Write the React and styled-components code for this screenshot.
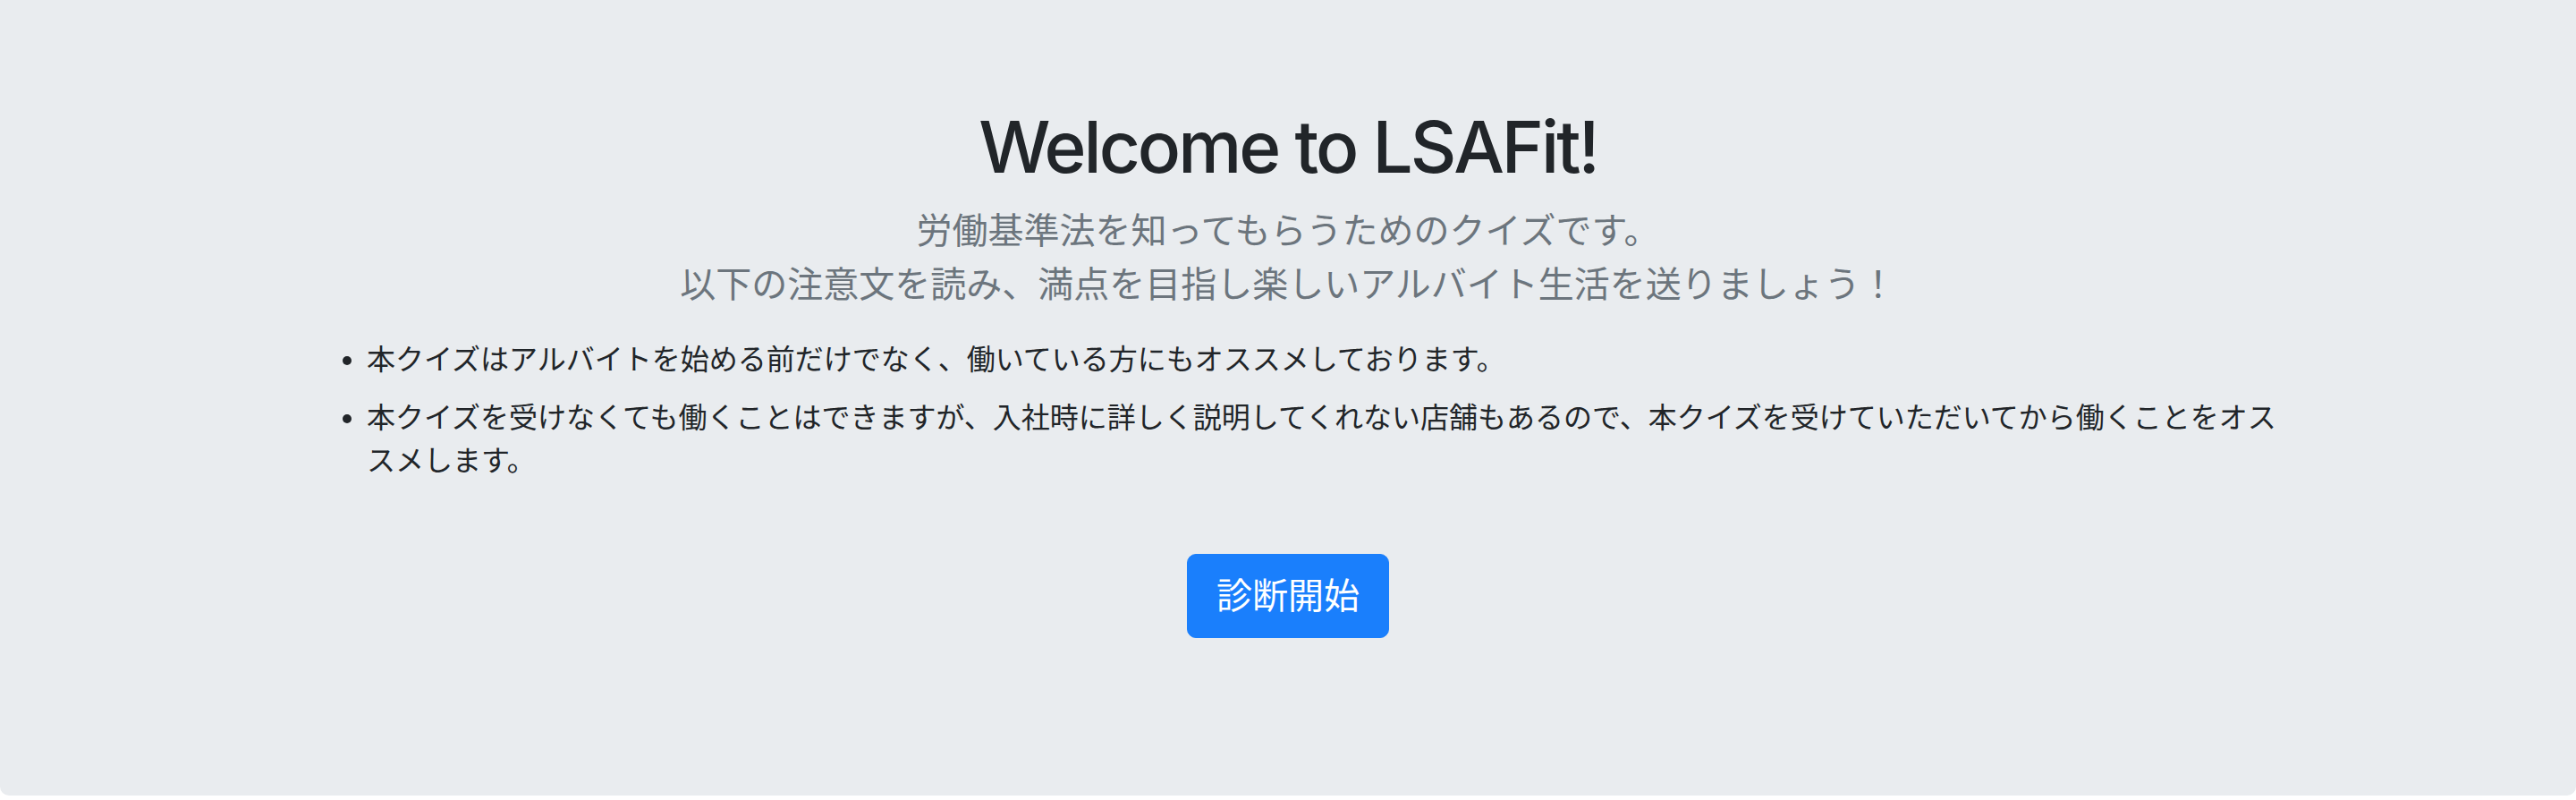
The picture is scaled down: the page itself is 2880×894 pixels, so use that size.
import React from 'react';
import styled, { createGlobalStyle } from 'styled-components';

var GlobalStyle = createGlobalStyle`
  *, *::before, *::after {
    box-sizing: border-box;
  }
  body {
    margin: 0;
    background: #fff;
    font-family: "Inter", "Noto Sans CJK JP", sans-serif;
    color: #212529;
  }
`

var Jumbotron = styled.section`
  background-color: #e9ecef;
  border-radius: 0 0 10px 10px;
  padding: 116px 0 176px;
`

var Container = styled.div`
  max-width: 2280px;
  margin: 0 auto;
  padding: 0 30px;
`

var Title = styled.h1`
  margin: 0 0 16px;
  font-size: 80px;
  line-height: 96px;
  font-weight: 500;
  letter-spacing: -3px;
  text-align: center;
  color: #212529;
`

var Lead = styled.p`
  margin: 0 0 30px;
  font-size: 40px;
  line-height: 60px;
  font-weight: 400;
  text-align: center;
  color: #6c757d;
`

var Notes = styled.ul`
  margin: 0;
  padding-left: 80px;
  font-size: 32px;
  line-height: 48px;
`

var Note = styled.li`
  margin-bottom: 17px;
  &:last-child {
    margin-bottom: 0;
  }
`

var ButtonRow = styled.div`
  margin-top: 80px;
  text-align: center;
`

var StartButton = styled.button`
  display: inline-block;
  padding: 16px 32px;
  font-family: inherit;
  font-size: 40px;
  line-height: 60px;
  color: #fff;
  background-color: #1a7ffc;
  border: 1px solid #1a7ffc;
  border-radius: 10px;
  cursor: pointer;
`

var notes = [
  '本クイズはアルバイトを始める前だけでなく、働いている方にもオススメしております。',
  '本クイズを受けなくても働くことはできますが、入社時に詳しく説明してくれない店舗もあるので、本クイズを受けていただいてから働くことをオススメします。'
];

var App = () => {
  return (
    <>
      <GlobalStyle />
      <Jumbotron>
        <Container>
          <Title>Welcome to LSAFit!</Title>
          <Lead>
            労働基準法を知ってもらうためのクイズです。<br />
            以下の注意文を読み、満点を目指し楽しいアルバイト生活を送りましょう！
          </Lead>
          <Notes>
            {notes.map((text, i) => <Note key={i}>{text}</Note>)}
          </Notes>
          <ButtonRow>
            <StartButton>診断開始</StartButton>
          </ButtonRow>
        </Container>
      </Jumbotron>
    </>
  )
};

export default App;
